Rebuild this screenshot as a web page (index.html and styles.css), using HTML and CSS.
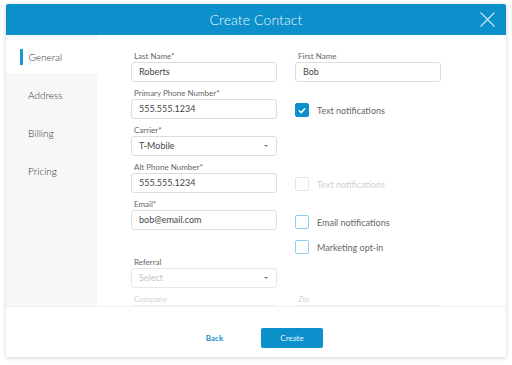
FILE: index.html
```html
<!DOCTYPE html>
<html>
<head>
<meta charset="utf-8">
<link rel="stylesheet" href="styles.css">
</head>
<body>
<div class="modal">
  <div class="header">
    <span class="title">Create Contact</span>
    <svg class="close" width="15" height="15" viewBox="0 0 15 15"><path d="M0.5 0.5 L14.5 14.5 M14.5 0.5 L0.5 14.5" stroke="#cfe9f6" stroke-width="1.1" fill="none"/></svg>
  </div>
  <div class="body">
    <nav class="sidebar">
      <div class="nav-item active"><span class="bar"></span>General</div>
      <div class="nav-item">Address</div>
      <div class="nav-item">Billing</div>
      <div class="nav-item">Pricing</div>
    </nav>
    <div class="form">
      <div class="field"><div class="label">Last Name*</div><div class="input">Roberts</div></div>
      <div class="field"><div class="label">First Name</div><div class="input">Bob</div></div>

      <div class="field"><div class="label">Primary Phone Number*</div><div class="input">555.555.1234</div></div>
      <div class="checks"><div class="check"><span class="box checked"><svg width="8" height="7" viewBox="0 0 8 7"><path d="M1 3.5 L3.2 5.6 L7 1.4" stroke="#fff" stroke-width="1.5" fill="none"/></svg></span>Text notifications</div></div>

      <div class="field"><div class="label">Carrier*</div><div class="input select">T-Mobile<span class="caret"></span></div></div>
      <div></div>

      <div class="field"><div class="label">Alt Phone Number*</div><div class="input">555.555.1234</div></div>
      <div class="checks"><div class="check disabled"><span class="box"></span>Text notifications</div></div>

      <div class="field"><div class="label">Email*</div><div class="input">bob@email.com</div></div>
      <div class="checks pair"><div class="check"><span class="box blue"></span>Email notifications</div><div class="check"><span class="box blue"></span>Marketing opt-in</div></div>

      <div class="field"><div class="label">Referral</div><div class="input select placeholder">Select<span class="caret"></span></div></div>
      <div></div>

      <div class="field faded"><div class="label">Company</div><div class="input"></div></div>
      <div class="field faded"><div class="label">Zip</div><div class="input"></div></div>
    </div>
  </div>
  <div class="footer">
    <button class="btn back">Back</button>
    <button class="btn create">Create</button>
  </div>
</div>
</body>
</html>
```
FILE: styles.css
```css
* { box-sizing: border-box; }
html, body { margin: 0; padding: 0; background: #fff; }
body {
  font-family: "Lato", "Liberation Sans", sans-serif;
  font-weight: 400;
  color: #555;
  width: 512px;
  height: 365px;
  overflow: hidden;
}
.modal {
  margin: 4px 6px 0 6px;
  width: 500px;
  height: 353px;
  background: #fff;
  border-radius: 2px;
  box-shadow: 0 1px 4px rgba(0,0,0,0.18);
  display: flex;
  flex-direction: column;
  overflow: hidden;
}
.header {
  height: 31px;
  flex: none;
  background: #0b90cb;
  display: flex;
  align-items: center;
  justify-content: center;
  position: relative;
}
.title {
  color: #e9f5fb;
  font-size: 14px;
  font-weight: 300;
  letter-spacing: 0.1px;
}
.close {
  position: absolute;
  right: 11px;
  top: 8px;
}
.body {
  height: 271px;
  flex: none;
  display: flex;
  overflow: hidden;
}
.sidebar {
  width: 91px;
  flex: none;
  background: #f7f7f7;
  padding-top: 5px;
}
.nav-item {
  height: 33px;
  margin-bottom: 5px;
  display: flex;
  align-items: center;
  padding-left: 22px;
  font-size: 10px;
  font-weight: 300;
  color: #333;
}
.nav-item.active {
  background: #fff;
  padding-left: 14px;
}
.bar {
  width: 2.5px;
  height: 16px;
  background: #1a97d2;
  margin-right: 6px;
}
.form {
  flex: 1;
  padding: 16px 0 0 34px;
  display: grid;
  grid-template-columns: 146px 146px;
  column-gap: 18px;
  row-gap: 6px;
  align-content: start;
}
.label {
  font-size: 8px;
  line-height: 10px;
  height: 10px;
  color: #666;
  margin-bottom: 1px;
  padding-left: 3px;
}
.input {
  height: 20px;
  border: 1px solid #dcdcdc;
  border-radius: 3px;
  font-size: 9px;
  line-height: 18px;
  padding-left: 7px;
  color: #444;
  position: relative;
}
.select { display: flex; align-items: center; justify-content: space-between; padding-right: 8px; }
.caret {
  width: 0; height: 0;
  border-left: 2px solid transparent;
  border-right: 2px solid transparent;
  border-top: 2.5px solid #777;
}
.placeholder { color: #c4c4c4; border-color: #e6e6e6; }
.faded .label { color: #d4d4d4; }
.faded .input { border-color: #f0f0f0; }
.checks {
  padding-top: 15px;
  display: flex;
  flex-direction: column;
  gap: 11px;
}
.checks.pair { padding-top: 16px; margin-bottom: -3px; }
.check {
  display: flex;
  align-items: center;
  font-size: 9px;
  color: #666;
  height: 14px;
}
.box {
  width: 14px; height: 14px;
  border: 1px solid #d8d8d8;
  border-radius: 2px;
  margin-right: 8px;
  display: flex;
  align-items: center;
  justify-content: center;
  flex: none;
}
.box.checked { background: #0b90cb; border-color: #0b90cb; }
.box.blue { border-color: #8dcfee; }
.check.disabled { color: #cfcfcf; }
.check.disabled .box { border-color: #e3e3e3; }
.footer {
  flex: 1;
  border-top: 1px solid #efefef;
  display: flex;
  justify-content: center;
  gap: 21px;
  padding-top: 21px;
}
.btn {
  height: 20px;
  border: none;
  border-radius: 2px;
  font-family: inherit;
  font-size: 8px;
  cursor: pointer;
  padding: 0;
}
.back { width: 51px; background: transparent; color: #1a8fc8; font-weight: 700; }
.create { width: 62px; background: #0b90cb; color: #e6f4fb; font-weight: 400; }
```
